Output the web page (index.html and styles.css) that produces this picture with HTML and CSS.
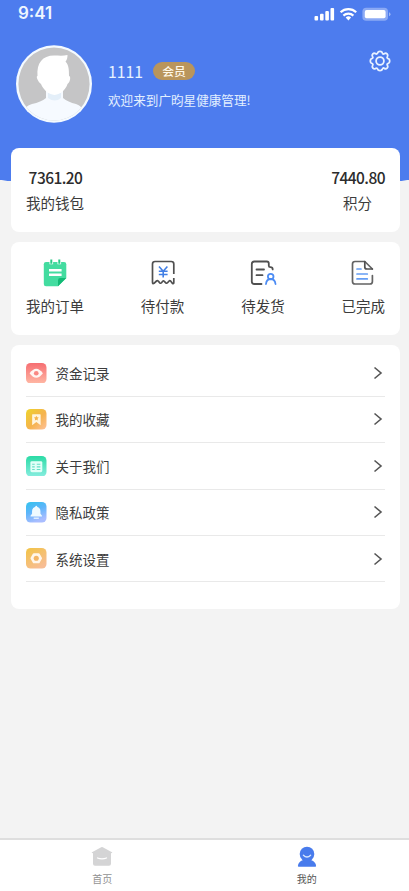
FILE: index.html
```html
<!DOCTYPE html>
<html lang="zh-CN">
<head>
<meta charset="utf-8">
<meta name="viewport" content="width=device-width, initial-scale=1">
<title>我的</title>
<link rel="stylesheet" href="styles.css">
</head>
<body>
<div class="app">
  <header class="hero">
    <div class="status">
      <span class="time">9:41</span>
      <svg class="status-icons" width="78" height="14" viewBox="0 0 78 14" fill="#fff">
        <rect x="0.5" y="9" width="3.6" height="4.4" rx="1"/>
        <rect x="6" y="6.8" width="3.6" height="6.6" rx="1"/>
        <rect x="11.3" y="4" width="3.6" height="9.4" rx="1"/>
        <rect x="16.5" y="1" width="3.6" height="12.4" rx="1"/>
        <g fill="none" stroke="#fff" stroke-width="2.2">
          <path d="M26.6 5.3a11.4 11.4 0 0 1 15.6 0"/>
          <path d="M29.4 8.6a7.4 7.4 0 0 1 10 0"/>
        </g>
        <path d="M31.7 10.5a4.2 4.2 0 0 1 5.4 0L34.4 13.4z"/>
        <rect x="48.4" y=".7" width="25.600" height="13" rx="3.800" fill-opacity=".35"/>
        <rect x="50.8" y="3.1" width="20.8" height="8.2" rx="1.8"/>
        <path d="M75 5.2q1.5.5 1.5 2t-1.5 2z" fill-opacity=".45"/>
      </svg>
    </div>
    <div class="profile">
      <svg class="avatar" width="76" height="78" viewBox="0 0 76 78">
        <defs><clipPath id="face"><ellipse cx="38" cy="39" rx="35.6" ry="36.6"/></clipPath></defs>
        <ellipse cx="38" cy="39" rx="38" ry="38.7" fill="#f4faff"/>
        <g clip-path="url(#face)">
          <rect width="76" height="78" fill="#c5c5c6"/>
          <path d="M30 44h17v9q5 4 13 6 6 2 8 8v12H7V67q2-6 9-8 9-2 14-6z" fill="#f6faff"/>
          <path d="M32 48h13v5q-6 5-13 0z" fill="#e4eff9"/>
          <path d="M21.500 31c-1-13 5-20.500 16.500-20.500 5 0 9 .5 13.500-.5 0 3-.5 5-2 6.500 3.500 4 3.500 8.500 3.500 14.500 2 0 1.500 6-1.500 8-2 6-6.500 10-13 11-6.500-1-11-5-13.500-11-3-2-5.500-8-3.500-8z" fill="#fff"/>
        </g>
      </svg>
      <div class="identity">
        <div class="name-row"><span class="name">1111</span><span class="badge">会员</span></div>
        <p class="welcome">欢迎来到广昀星健康管理!</p>
      </div>
      <svg class="gear" width="22" height="22" viewBox="0 0 22 22" fill="none" stroke="#e8f1ff" stroke-width="1.8" stroke-linejoin="round">
        <path d="M8.7 2.9Q9 1.3 11 1.3t2.3 1.6q.2 1.1 1.1 1.1.6 0 1.1-.4 1.4-.9 2.6.3t.3 2.6q-.7 1 0 1.7.3.4.9.5 1.4.3 1.4 2.3t-1.4 2.3q-1.2.3-1.2 1.2 0 .5.4 1 .9 1.4-.4 2.6t-2.6.3q-1-.7-1.7 0-.4.3-.5.9-.3 1.4-2.3 1.4t-2.3-1.4q-.3-1.2-1.2-1.2-.5 0-1 .4-1.4.9-2.6-.4t-.3-2.6q.7-1 0-1.7-.3-.4-.9-.5Q1.300 13 1.300 11t1.400-2.300q1.200-.2 1.200-1.100 0-.6-.4-1.100-.9-1.400.3-2.600t2.600-.3q1 .7 1.700 0 .4-.3.6-.7z"/>
        <circle cx="11" cy="11" r="3.9"/>
      </svg>
    </div>
  </header>

  <main class="content">
    <section class="card wallet">
      <div class="balance"><strong>7361.20</strong><span>我的钱包</span></div>
      <div class="balance"><strong>7440.80</strong><span>积分</span></div>
    </section>

    <section class="card orders">
      <a class="order">
        <svg width="28" height="28" viewBox="0 0 28 28">
          <path d="M5 3h18q2.300 0 2.300 2.300V19l-8.300 8.300H5Q2.800 27.300 2.800 25V5.300Q2.800 3 5 3z" fill="#43dca0"/>
          <path d="M25.300 19h-6q-2.300 0-2.300 2.300v6z" fill="#12ba75"/>
          <path d="M10.300.8v4.400M18.300.8v4.400" stroke="#fff" stroke-width="3.600"/>
          <path d="M10.300.5v4.200M18.300.5v4.200" stroke="#28c988" stroke-width="2"/>
          <path d="M8 11.300h12.600M8 15.700h12.600" stroke="#fff" stroke-width="2.400"/>
        </svg>
        <span>我的订单</span>
      </a>
      <a class="order">
        <svg width="28" height="28" viewBox="0 0 28 28" fill="none" stroke-linejoin="round">
          <path d="M24.800 15V5q0-2.500-2.500-2.500H6Q3.500 2.500 3.500 5v18.300q0 2 1.500 1L7.500 22q1-.8 1.800.2l1.500 1.600q.9.900 1.700 0l1.200-1.500q.8-.9 1.600 0l1.500 1.500q.9.900 1.700 0l1.400-1.600q.8-.9 1.700-.2l1.700 2.200q1.500 1 1.500-.8V19" stroke="#505050" stroke-width="1.700"/>
          <path d="M10 7.500l4.200 4.700 4.200-4.700M14.200 12.200v6.300M9.800 12.300h8.800M9.800 15.500h8.800" stroke="#427fe5" stroke-width="1.600"/>
        </svg>
        <span>待付款</span>
      </a>
      <a class="order">
        <svg width="28" height="28" viewBox="0 0 28 28" fill="none" stroke-linecap="round" stroke-linejoin="round" stroke-width="1.800">
          <path d="M12.500 25H5.300q-2.500 0-2.500-2.500V5q0-2.500 2.500-2.500h12.500q2 0 2 2v2.200q0 1.500 1.500 1.500 2.400 0 2.400 2.200" stroke="#505050"/>
          <path d="M7.500 10.500h7.500M7.500 16.200h6" stroke="#505050"/>
          <circle cx="21.700" cy="17.600" r="2.800" stroke="#4c8cf4"/>
          <path d="M17 25q.5-5 4.700-5t4.800 5" stroke="#4c8cf4"/>
        </svg>
        <span>待发货</span>
      </a>
      <a class="order">
        <svg width="28" height="28" viewBox="0 0 28 28" fill="none" stroke-linecap="round" stroke-linejoin="round" stroke-width="1.700">
          <path d="M23.400 16.500v6q0 2.500-2.500 2.500H6q-2.500 0-2.500-2.500V5Q3.500 2.500 6 2.500h9.800L23.400 10" stroke="#636363"/>
          <path d="M15.800 2.700V8q0 2 2 2h5.500" stroke="#505050"/>
          <path d="M8 10h4M8 15h10.300M8 19.900h10.300" stroke="#649df4"/>
        </svg>
        <span>已完成</span>
      </a>
    </section>

    <nav class="card menu">
      <a class="item">
        <svg class="tile" viewBox="0 0 20 20"><defs><linearGradient id="red" x2="0" y2="1"><stop stop-color="#f66e72"/><stop offset="1" stop-color="#ffb7a4"/></linearGradient></defs>
          <rect width="20" height="20" rx="4.500" fill="url(#red)"/><path d="M3.500 10Q10 1 16.500 10 10 19 3.500 10z" fill="#fff5f2"/><circle cx="10" cy="10" r="2.300" fill="#f98883"/></svg>
        <span>资金记录</span><svg class="arrow" viewBox="0 0 10 14"><path d="M1.500 1.500L8 7l-6.500 5.500"/></svg>
      </a>
      <a class="item">
        <svg class="tile" viewBox="0 0 20 20"><defs><linearGradient id="gold" x2="1" y2="1"><stop stop-color="#eed42b"/><stop offset=".55" stop-color="#f5b34e"/><stop offset="1" stop-color="#ffc29b"/></linearGradient></defs>
          <rect width="20" height="20" rx="4.500" fill="url(#gold)"/><path d="M6 5.500Q6 5 6.500 5h7.200q.6 0 .6.600V15.800l-4.200-3-4.100 3z" fill="#fff5df"/><path d="M10.100 6.500l.8 1.500 1.600.3-1.200 1.200.3 1.700-1.500-.8-1.500.8.300-1.700-1.200-1.200 1.600-.3z" fill="#f5b44e"/></svg>
        <span>我的收藏</span><svg class="arrow" viewBox="0 0 10 14"><path d="M1.500 1.500L8 7l-6.500 5.500"/></svg>
      </a>
      <a class="item">
        <svg class="tile" viewBox="0 0 20 20"><defs><linearGradient id="mint" x2="0" y2="1"><stop stop-color="#2bdba5"/><stop offset="1" stop-color="#86eddf"/></linearGradient></defs>
          <rect width="20" height="20" rx="4.500" fill="url(#mint)"/><rect x="4.300" y="5" width="11.600" height="10.800" rx="1.400" fill="#e2fff8"/><path d="M6 8h2.500M10.500 8H14M6 10.600h2.500M10.500 10.600H14M6 13.200h2.500M10.500 13.200H14" stroke="#66dfc5"/></svg>
        <span>关于我们</span><svg class="arrow" viewBox="0 0 10 14"><path d="M1.500 1.500L8 7l-6.500 5.500"/></svg>
      </a>
      <a class="item">
        <svg class="tile" viewBox="0 0 20 20"><defs><linearGradient id="sky" x2=".4" y2="1"><stop stop-color="#32c3ed"/><stop offset=".5" stop-color="#5db5fa"/><stop offset="1" stop-color="#a9bdff"/></linearGradient></defs>
          <rect width="20" height="20" rx="4.500" fill="url(#sky)"/><path d="M10 3.600q.9 0 .9 1 3.200.9 3.200 4.400v2.500l1.500 2v.7H4.400v-.7l1.500-2V9q0-3.500 3.200-4.400 0-1 .9-1z" fill="#effbff"/><path d="M7.500 15.800h5" stroke="#effbff" stroke-width="1.200"/></svg>
        <span>隐私政策</span><svg class="arrow" viewBox="0 0 10 14"><path d="M1.500 1.500L8 7l-6.500 5.500"/></svg>
      </a>
      <a class="item">
        <svg class="tile" viewBox="0 0 20 20"><defs><linearGradient id="amber" x2=".6" y2="1"><stop stop-color="#f2c444"/><stop offset="1" stop-color="#f7bd94"/></linearGradient></defs>
          <rect width="20" height="20" rx="4.500" fill="url(#amber)"/><path d="M7.700 5.100h4.600q.7 0 1 .5l2.200 3.800q.3.600 0 1.200l-2.200 3.800q-.3.500-1 .5H7.700q-.7 0-1-.5l-2.200-3.800q-.3-.6 0-1.200l2.200-3.800q.3-.5 1-.5z" fill="#fff6eb"/><circle cx="10" cy="10" r="2.500" fill="#f3b566"/></svg>
        <span>系统设置</span><svg class="arrow" viewBox="0 0 10 14"><path d="M1.500 1.500L8 7l-6.500 5.500"/></svg>
      </a>
    </nav>
  </main>

  <footer class="tabbar">
    <a class="tab">
      <svg width="22" height="22" viewBox="0 0 22 22"><path d="M10.200 1.200q.8-.5 1.600 0l9.200 5q.8.500-.2.900l-.8.200v10.400q0 2-2 2H4q-2 0-2-2V7.300l-.8-.2q-1-.4-.2-.9z" fill="#d4d4d5"/><path d="M6.500 12q4.500 1.700 9 0" fill="none" stroke="#fff" stroke-width="1.300" stroke-linecap="round"/></svg>
      <span>首页</span>
    </a>
    <a class="tab active">
      <svg width="22" height="22" viewBox="0 0 22 22" fill="#487bec"><circle cx="11" cy="8" r="7.300"/><path d="M7 14h8q4.800 1.800 5.100 6 0 .8-.8.800H2.700q-.8 0-.8-.8Q2.200 15.800 7 14z"/><path d="M7.400 9.300q3.600 3.500 7.200 0" fill="none" stroke="#d8e7ff" stroke-width="1.300" stroke-linecap="round"/></svg>
      <span>我的</span>
    </a>
  </footer>
</div>
</body>
</html>
```
FILE: styles.css
```css
* { box-sizing: border-box; }

body {
  margin: 0;
  background: #f3f3f3;
  color: #3c3c3c;
  font-family: "Noto Sans CJK SC", sans-serif;
}

.app {
  display: flex;
  flex-direction: column;
  height: 891px;
  overflow: hidden;
}

.hero {
  flex: none;
  height: 196px;
  background: radial-gradient(ellipse 620px 191px at 50% 0, #4d7cee 99.7%, transparent 100%);
  color: #fff;
}

.status {
  display: flex;
  justify-content: space-between;
  align-items: center;
  height: 27px;
  padding: 0 17px 0 18px;
}

.time {
  font: 600 17px/27px Inter, sans-serif;
  letter-spacing: 0;
  color: #edf6ff;
}

.profile {
  display: flex;
  padding: 18px 18px 0 16px;
}

.identity { margin: 16px 0 0 16px; }

.name-row {
  display: flex;
  align-items: center;
  gap: 10px;
  height: 20px;
}

.name {
  font-size: 15.800px;
  color: #e7f2ff;
}

.badge {
  width: 42px;
  height: 18px;
  border-radius: 9px;
  background: #b9955c;
  color: #fff8e8;
  font-size: 11.800px;
  font-weight: 500;
  line-height: 18px;
  text-align: center;
}

.welcome {
  margin: 10px 0 0;
  font-size: 12.600px;
  line-height: 18px;
  color: #e2efff;
  white-space: nowrap;
}

.gear { margin: 5px 0 0 auto; }

.content {
  display: flex;
  flex-direction: column;
  gap: 10px;
  margin-top: -48px;
  padding: 0 9px 0 11px;
}

.card {
  border-radius: 8px;
  background: #fff;
}

.wallet {
  display: flex;
  justify-content: space-between;
  height: 84px;
  padding: 19px 15px 0;
}

.balance {
  display: flex;
  flex-direction: column;
  align-items: center;
  gap: 5px;
  font-size: 14.500px;
  line-height: 21px;
}

.balance strong {
  padding-left: 1px;
  color: #2c2c2c;
  font-size: 15.500px;
  font-weight: 500;
  letter-spacing: -0.550px;
  line-height: 20px;
}

.orders {
  display: flex;
  justify-content: space-between;
  height: 93px;
  padding: 17px 15px 0;
}

.order {
  display: flex;
  flex-direction: column;
  align-items: center;
  gap: 8px;
  font-size: 14.500px;
  line-height: 21px;
}

.menu {
  height: 264px;
  padding: 5.400px 15px 0;
}

.item {
  display: flex;
  align-items: center;
  height: 46.400px;
  border-bottom: 1px solid #e9e9e9;
  font-size: 13.500px;
}

.tile {
  width: 20.500px;
  height: 20.500px;
  margin-right: 9px;
}

.arrow {
  width: 10px;
  height: 14px;
  margin: 0 2.500px 0 auto;
  fill: none;
  stroke: #555;
  stroke-width: 1.600;
}

.tabbar {
  display: flex;
  flex: none;
  height: 53px;
  margin-top: auto;
  border-top: 2px solid #dedede;
  background: #fff;
}

.tab {
  display: flex;
  flex: 1;
  flex-direction: column;
  align-items: center;
  gap: 3px;
  padding-top: 6px;
  color: #929292;
  font-size: 10px;
  line-height: 15px;
}

.tab.active { color: #555; }
```
